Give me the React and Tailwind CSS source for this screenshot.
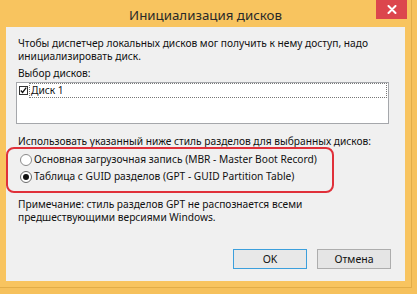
export default function App() {
  return (
    <div className="w-[417px] h-[294px] overflow-hidden bg-[#f6c15c] font-['Noto_Sans',sans-serif] text-[10.2px] leading-[13px] text-[#111]">
      <div className="w-[412px] h-[288px] border-r border-b border-[#e2ad48] bg-[#f8c45f] flex flex-col">
        {/* title bar */}
        <div className="relative h-[27px] flex items-center justify-center shrink-0">
          <span className="text-[13.3px] leading-[18px] text-[#2a2a2a] pt-[2px]">Инициализация дисков</span>
          <div className="absolute left-[376px] top-0 w-[31px] h-[19px] bg-[#dc464d] flex items-center justify-center">
            <svg width="10" height="9" viewBox="0 0 10 9">
              <path d="M1.5 1l7 7M8.5 1l-7 7" stroke="#fff" strokeWidth="2" strokeLinecap="round" />
            </svg>
          </div>
        </div>

        {/* client area */}
        <div className="relative ml-[6px] w-[399px] h-[254px] bg-[#f0f0f0] flex flex-col">
          <p className="pl-[12px] pt-[10px]">
            Чтобы диспетчер локальных дисков мог получить к нему доступ, надо
            <br />
            инициализировать диск.
          </p>

          <p className="pl-[12px] mt-[4px]">Выбор дисков:</p>

          <div className="ml-[10px] mt-[2px] w-[373px] h-[42px] bg-white border border-[#a5a7ab]">
            <div className="flex items-center pl-[2px]">
              <div className="w-[9px] h-[9px] border border-[#333] bg-white flex items-center justify-center">
                <svg width="7" height="7" viewBox="0 0 7 7">
                  <path d="M0.8 3.5l1.8 2 3.6-4.8" stroke="#111" strokeWidth="1.3" fill="none" />
                </svg>
              </div>
              <div className="ml-[1px] mr-[1px] flex-1 h-[15px] border border-dotted border-[#777] flex items-center pl-[1px]">
                Диск 1
              </div>
            </div>
          </div>

          <p className="pl-[12px] mt-[11px]">Использовать указанный ниже стиль разделов для выбранных дисков:</p>

          <div className="mt-[3px]">
            <div className="h-[17px] flex items-center pl-[14px]">
              <span className="w-[12px] h-[12px] rounded-full border border-[#8a8a8a] bg-white" />
              <span className="ml-[2px]">Основная загрузочная запись (MBR - Master Boot Record)</span>
            </div>
            <div className="h-[17px] flex items-center pl-[14px]">
              <span className="w-[12px] h-[12px] rounded-full border border-[#6a6a6a] bg-white flex items-center justify-center">
                <span className="w-[6px] h-[6px] rounded-full bg-[#111]" />
              </span>
              <span className="ml-[2px]">Таблица с GUID разделов (GPT - GUID Partition Table)</span>
            </div>
          </div>

          <p className="pl-[12px] mt-[13px]">
            Примечание: стиль разделов GPT не распознается всеми
            <br />
            предшествующими версиями Windows.
          </p>

          <div className="mt-auto pb-[12px] pr-[14px] flex justify-end gap-[10px]">
            <button className="w-[74px] h-[20px] border border-[#3c9fdc] bg-[#e8e8e8] text-[10.5px] font-['Noto_Sans',sans-serif]">
              OK
            </button>
            <button className="w-[74px] h-[20px] border border-[#adadad] bg-[#e5e5e5] text-[10.5px] font-['Noto_Sans',sans-serif]">
              Отмена
            </button>
          </div>

          {/* red annotation around partition style options */}
          <div className="absolute left-0 top-[120px] w-[328px] h-[46px] border-2 border-[#e0303a] rounded-[8px]" />
        </div>
      </div>
    </div>
  )
}
